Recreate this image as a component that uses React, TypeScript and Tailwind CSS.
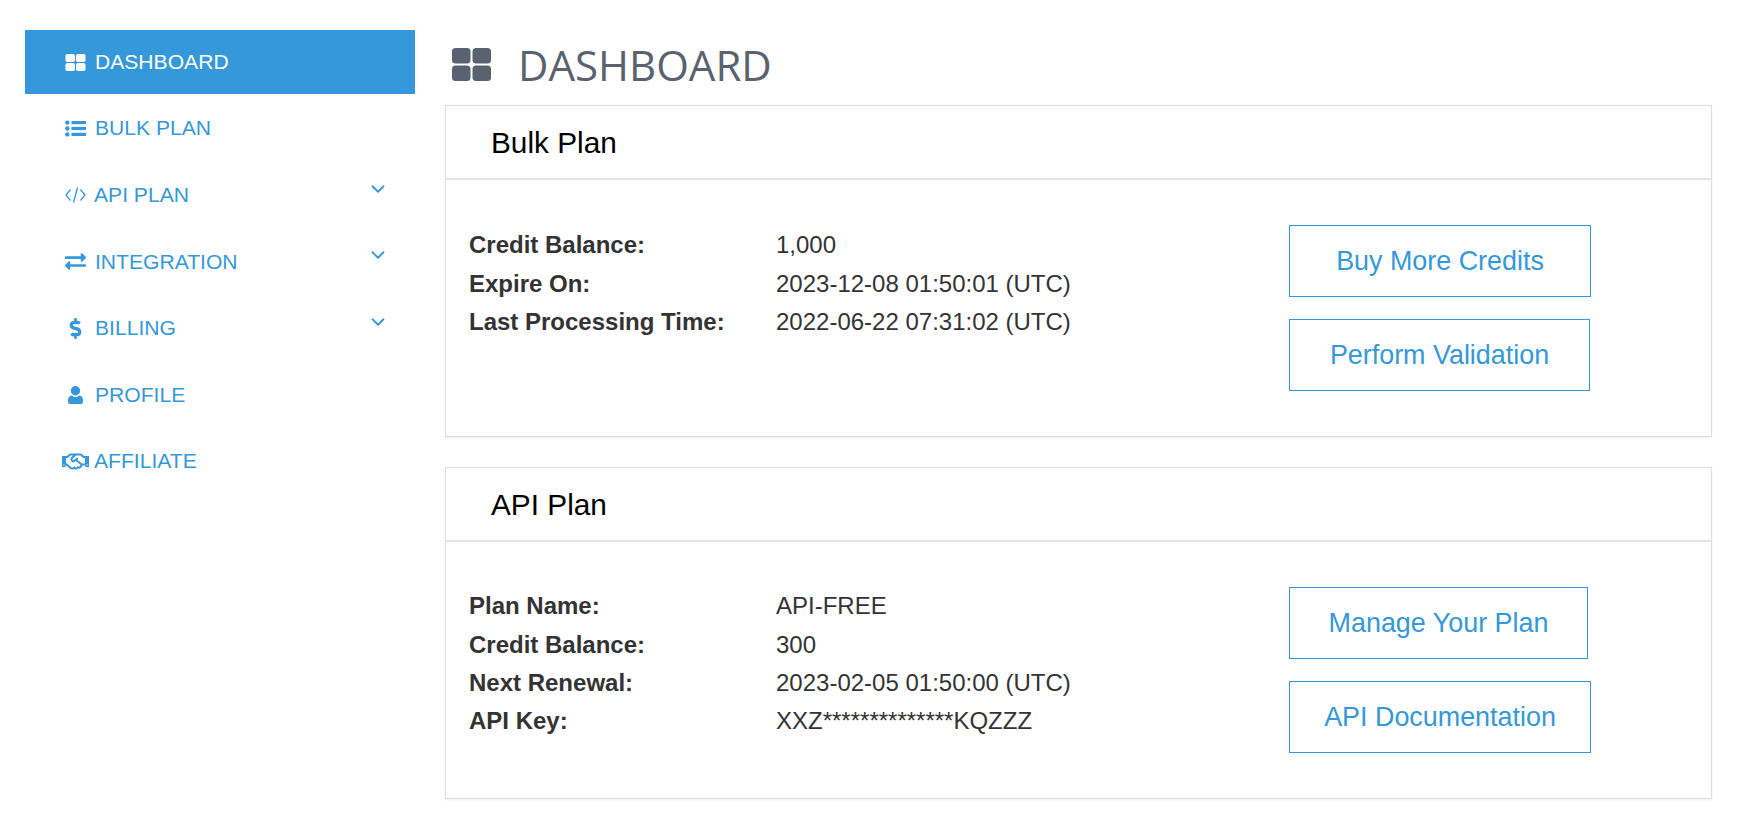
import { ChevronDown } from 'lucide-react';
import { FaExchangeAlt, FaDollarSign, FaRegHandshake } from 'react-icons/fa';

const GridIcon = ({ className }: { className: string }) => (
  <svg viewBox="0 0 39 33" fill="currentColor" className={className}>
    <rect x="0" y="0" width="18.5" height="15.5" rx="3.5" />
    <rect x="20.5" y="0" width="18.5" height="15.5" rx="3.5" />
    <rect x="0" y="17.5" width="18.5" height="15.5" rx="3.5" />
    <rect x="20.5" y="17.5" width="18.5" height="15.5" rx="3.5" />
  </svg>
);

const ListIcon = () => (
  <svg viewBox="0 0 21 17" fill="currentColor" className="h-[17px] w-[21px]">
    <circle cx="2.3" cy="2.6" r="2.2" />
    <circle cx="2.3" cy="8.5" r="2.2" />
    <circle cx="2.3" cy="14.4" r="2.2" />
    <rect x="6.5" y="1" width="14.5" height="3.2" />
    <rect x="6.5" y="6.9" width="14.5" height="3.2" />
    <rect x="6.5" y="12.8" width="14.5" height="3.2" />
  </svg>
);

const CodeIcon = () => (
  <svg viewBox="0 0 21 16" fill="none" stroke="currentColor" strokeWidth="1.3" className="h-[16px] w-[21px]">
    <path d="M5.5 2.5 1 8l4.5 5.5" />
    <path d="M15.5 2.5 20 8l-4.5 5.5" />
    <path d="M12.5 .5 8.5 15.5" />
  </svg>
);

const UserIcon = () => (
  <svg viewBox="0 0 15 18" fill="currentColor" className="h-[18px] w-[15px]">
    <circle cx="7.5" cy="4.8" r="4.7" />
    <path d="M0 16v-2c0-3 2-4.5 4-4.5 1 1 2 1.500 3.500 1.500s2.500-.5 3.500-1.500c2 0 4 1.500 4 4.500v2c0 1.200-1 2-2 2H2c-1 0-2-.8-2-2z" />
  </svg>
);

const menu = [
  { label: 'DASHBOARD', icon: <GridIcon className="h-[17px] w-[21px]" />, active: true },
  { label: 'BULK PLAN', icon: <ListIcon /> },
  { label: 'API PLAN', icon: <CodeIcon />, sub: true, tight: true },
  { label: 'INTEGRATION', icon: <FaExchangeAlt size={21} />, sub: true },
  { label: 'BILLING', icon: <FaDollarSign size={21} />, sub: true },
  { label: 'PROFILE', icon: <UserIcon /> },
  { label: 'AFFILIATE', icon: <FaRegHandshake size={27} className="shrink-0" />, tight: true },
];

const Card = ({ title, rows, buttons, top }: { title: string; rows: string[][]; buttons: string[][]; top: string }) => (
  <section className="h-[332px] border border-[#dedede] shadow-[0_1px_2px_rgba(0,0,0,0.06)]">
    <h2 className="h-[74px] border-b-2 border-[#e5e5e5] pl-[45px] pt-[20px] text-[29.8px] leading-[34px] text-black">{title}</h2>
    <div className="flex pl-[23px]">
      <div className={top + ' w-[820px]'}>
        {rows.map(([label, value]) => (
          <div key={label} className="flex h-[38.4px] items-center text-[24px] text-[#333]">
            <span className="w-[307px] font-bold">{label}</span>
            <span>{value}</span>
          </div>
        ))}
      </div>
      <div className="flex flex-col gap-[22px] pt-[45px]">
        {buttons.map(([text, w]) => (
          <a key={text} className={w + ' flex h-[72px] items-center justify-center border border-[#3498db] text-[26.9px] text-[#3498db]'}>{text}</a>
        ))}
      </div>
    </div>
  </section>
);

export default function App() {
  return (
    <div className="flex h-[823px] bg-white pl-[25px] pt-[30px] font-['Liberation_Sans',sans-serif]">
      <nav className="w-[390px] shrink-0 text-[21.1px]">
        {menu.map((m) => (
          <div key={m.label} className={(m.active ? 'mb-[1px] h-[64px] bg-[#3498db] text-white ' : 'h-[66.6px] text-[#3498db] ') + 'flex items-center pl-[40px]'}>
            <span className={(m.tight ? 'mr-[8px] ' : 'mr-[9px] ') + 'flex w-[21px] justify-center'}>{m.icon}</span>
            <span>{m.label}</span>
            {m.sub && <ChevronDown size={22} className="ml-auto mr-[26px] -translate-y-[6px]" />}
          </div>
        ))}
      </nav>
      <main className="-mt-[30px] ml-[30px] w-[1267px]">
        <h1 className="flex h-[105px] items-center pl-[7px] pt-[24px] font-['Open_Sans',sans-serif] text-[42px] font-normal text-[#5a6270]">
          <GridIcon className="mr-[27px] h-[33px] w-[39px]" />
          DASHBOARD
        </h1>
        <Card
          title="Bulk Plan"
          top="pt-[46px]"
          rows={[['Credit Balance:', '1,000'], ['Expire On:', '2023-12-08 01:50:01 (UTC)'], ['Last Processing Time:', '2022-06-22 07:31:02 (UTC)']]}
          buttons={[['Buy More Credits', 'w-[302px]'], ['Perform Validation', 'w-[301px]']]}
        />
        <div className="h-[30px]" />
        <Card
          title="API Plan"
          top="pt-[45px]"
          rows={[['Plan Name:', 'API-FREE'], ['Credit Balance:', '300'], ['Next Renewal:', '2023-02-05 01:50:00 (UTC)'], ['API Key:', 'XXZ**************KQZZZ']]}
          buttons={[['Manage Your Plan', 'w-[299px]'], ['API Documentation', 'w-[302px]']]}
        />
      </main>
    </div>
  );
}
